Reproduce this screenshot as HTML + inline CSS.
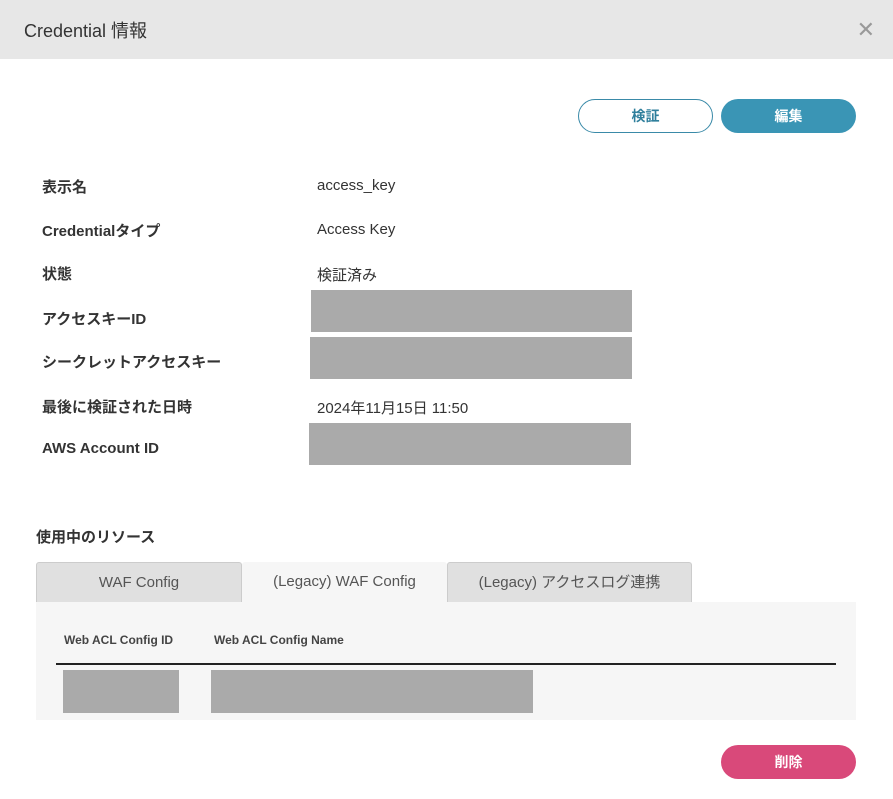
<!DOCTYPE html>
<html><head><meta charset="utf-8"><style>
*{margin:0;padding:0;box-sizing:border-box}
body{width:893px;height:799px;background:#fff;font-family:"Liberation Sans","Noto Sans CJK JP",sans-serif;color:#333;position:relative;overflow:hidden}
.hdr{position:absolute;left:0;top:0;width:893px;height:59px;background:#e7e7e7}
.hdr h1{position:absolute;left:24px;top:17px;font-size:18px;font-weight:normal;color:#333}
.x{position:absolute;right:18px;top:17px;font-size:22px;color:#999;font-weight:100}
.btn{position:absolute;height:34px;border-radius:17px;font-size:14px;font-weight:bold;text-align:center;line-height:32px}
.l{position:absolute;left:42px;font-size:15px;font-weight:bold;color:#333}
.v{position:absolute;left:317px;font-size:15px;color:#333}
.g{position:absolute;background:#aaa}
.tab{position:absolute;top:562px;height:40px;background:#e0e0e0;border:1px solid #ccc;border-bottom:none;font-size:15px;color:#555;text-align:center;line-height:40px;border-radius:3px 3px 0 0}
</style></head><body>
<div class="hdr"><h1>Credential 情報</h1><div class="x">✕</div></div>
<div class="btn" style="left:578px;top:99px;width:135px;border:1px solid #3a8aa8;color:#2f7f9c;background:#fff">検証</div>
<div class="btn" style="left:721px;top:99px;width:135px;background:#3a95b5;color:#fff;line-height:34px">編集</div>
<div class="l" style="top:176px">表示名</div><div class="v" style="top:177px">access_key</div>
<div class="l" style="top:220px">Credentialタイプ</div><div class="v" style="top:221px">Access Key</div>
<div class="l" style="top:263px">状態</div><div class="v" style="top:264px">検証済み</div>
<div class="l" style="top:308px">アクセスキーID</div><div class="g" style="left:311px;top:290px;width:321px;height:42px"></div>
<div class="l" style="top:351px">シークレットアクセスキー</div><div class="g" style="left:310px;top:337px;width:322px;height:42px"></div>
<div class="l" style="top:396px">最後に検証された日時</div><div class="v" style="top:397px">2024年11月15日 11:50</div>
<div class="l" style="top:440px">AWS Account ID</div><div class="g" style="left:309px;top:423px;width:322px;height:42px"></div>
<div class="l" style="left:36px;top:526px">使用中のリソース</div>
<div style="position:absolute;left:36px;top:602px;width:820px;height:118px;background:#f6f6f6"></div>
<div class="tab" style="left:36px;width:206px">WAF Config</div>
<div class="tab" style="left:242px;width:205px;background:#f6f6f6;border:none">(Legacy) WAF Config</div>
<div class="tab" style="left:447px;width:245px">(Legacy) アクセスログ連携</div>
<div style="position:absolute;left:64px;top:633px;font-size:12px;font-weight:bold;color:#444">Web ACL Config ID</div>
<div style="position:absolute;left:214px;top:633px;font-size:12px;font-weight:bold;color:#444">Web ACL Config Name</div>
<div style="position:absolute;left:56px;top:663px;width:780px;height:2px;background:#222"></div>
<div class="g" style="left:63px;top:670px;width:116px;height:43px"></div>
<div class="g" style="left:211px;top:670px;width:322px;height:43px"></div>
<div class="btn" style="left:721px;top:745px;width:135px;background:#d9497a;color:#fff;line-height:34px">削除</div>
</body></html>
